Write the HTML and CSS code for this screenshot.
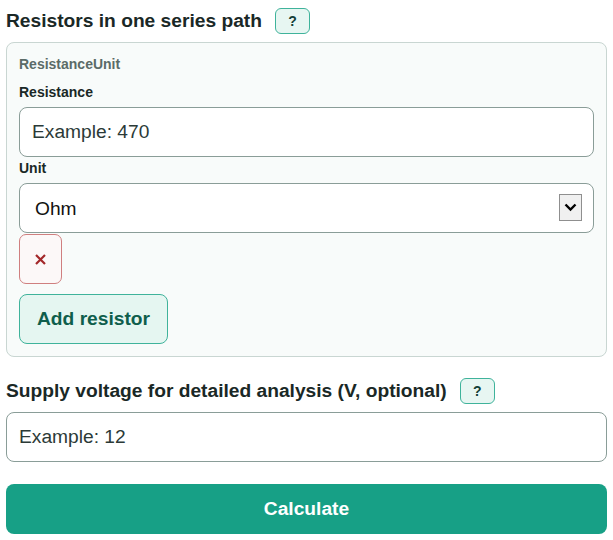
FILE: index.html
```html
<!DOCTYPE html>
<html lang="en">
<head>
  <meta charset="UTF-8">
  <title>Series Resistance Calculator</title>
  <link rel="stylesheet" href="styles.css">
</head>
<body>
  <main class="calc">
    <div class="field-head">
      <h2 class="field-title">Resistors in one series path</h2>
      <button class="help-btn" type="button">?</button>
    </div>

    <fieldset class="resistor-list">
      <div class="resistor-item">
        <div class="item-title">ResistanceUnit</div>

        <label class="field-label" for="r1">Resistance</label>
        <input class="text-input value-input" id="r1" type="text" placeholder="Example: 470">

        <label class="field-label" for="u1">Unit</label>
        <div class="select-wrap">
          <select class="text-input unit-select" id="u1">
            <option>Ohm</option>
            <option>kOhm</option>
            <option>MOhm</option>
          </select>
          <span class="select-arrow">
            <svg width="13" height="9" viewBox="0 0 13 9"><path d="M1.5 1.5 L6.5 6.5 L11.5 1.5" fill="none" stroke="#000" stroke-width="2.4"/></svg>
          </span>
        </div>

        <button class="remove-btn" type="button" title="Remove">
          <svg width="11" height="11" viewBox="0 0 11 11"><path d="M1 1 L10 10 M10 1 L1 10" stroke="#a3282a" stroke-width="2.2"/></svg>
        </button>
      </div>

      <button class="add-btn" type="button">Add resistor</button>
    </fieldset>

    <div class="field-head supply-head">
      <h2 class="field-title">Supply voltage for detailed analysis (V, optional)</h2>
      <button class="help-btn" type="button">?</button>
    </div>
    <input class="text-input supply-input" type="text" placeholder="Example: 12">

    <button class="calc-btn" type="button">Calculate</button>
  </main>
</body>
</html>
```

FILE: styles.css
```css
body {
  margin: 0;
  padding: 8px 6px;
  font-family: 'Liberation Sans', Arial, sans-serif;
  color: #1d2b29;
  background: #fff;
}

.field-head {
  display: flex;
  align-items: flex-start;
  gap: 13px;
  margin-bottom: 8px;
}

.field-title {
  margin: 2px 0 0;
  font-size: 19.2px;
  line-height: 22px;
  font-weight: bold;
  color: #1a2826;
}

.help-btn {
  width: 35px;
  height: 26px;
  padding: 0;
  border: 1px solid #3fb39b;
  border-radius: 6px;
  background: #e7f6f2;
  color: #123f37;
  font-family: inherit;
  font-size: 14px;
  font-weight: bold;
  cursor: pointer;
}

.resistor-list {
  margin: 0;
  min-width: 0;
  padding: 13px 12px 12px;
  border: 1px solid #c9d6d2;
  border-radius: 8px;
  background: #f8fbfa;
}

.item-title {
  font-size: 14px;
  line-height: 16px;
  font-weight: bold;
  color: #5b6b68;
  margin-bottom: 11px;
}

.field-label {
  display: block;
  font-size: 14px;
  line-height: 18px;
  font-weight: bold;
  color: #1a2826;
  margin-bottom: 6px;
}

.text-input {
  display: block;
  width: 100%;
  height: 50px;
  box-sizing: border-box;
  padding: 0 12px;
  border: 1px solid #8a9d98;
  border-radius: 8px;
  background: #fff;
  font-family: inherit;
  font-size: 19.2px;
  color: #2b3a37;
}

.text-input::placeholder {
  color: #2b3a37;
  opacity: 1;
}

.value-input {
  margin-bottom: 2px;
}

.select-wrap {
  position: relative;
  margin-bottom: 1px;
}

.unit-select {
  appearance: none;
  padding-left: 15px;
  color: #111;
}

/* old-style dropdown button drawn over the right end of the select */
.select-arrow {
  position: absolute;
  right: 12px;
  top: 11px;
  width: 23px;
  height: 27px;
  box-sizing: border-box;
  border: 1px solid #8f8f8f;
  background: #f0f0f0;
  display: flex;
  align-items: center;
  justify-content: center;
  pointer-events: none;
}

.remove-btn {
  display: flex;
  align-items: center;
  justify-content: center;
  width: 43px;
  height: 50px;
  padding: 0;
  border: 1px solid #cf7f7f;
  border-radius: 7px;
  background: #fcf8f8;
  cursor: pointer;
}

.add-btn {
  margin-top: 10px;
  height: 50px;
  padding: 0 17px;
  border: 1px solid #3fb39b;
  border-radius: 8px;
  background: #e5f6f1;
  color: #0f5e4c;
  font-family: inherit;
  font-size: 19.2px;
  font-weight: bold;
  cursor: pointer;
}

.supply-head {
  margin-top: 21px;
}

.supply-input {
  height: 50px;
  margin-bottom: 22px;
}

.calc-btn {
  display: block;
  width: 100%;
  height: 50px;
  border: none;
  border-radius: 8px;
  background: #17a086;
  color: #fff;
  font-family: inherit;
  font-size: 19.2px;
  font-weight: bold;
  cursor: pointer;
}
```
